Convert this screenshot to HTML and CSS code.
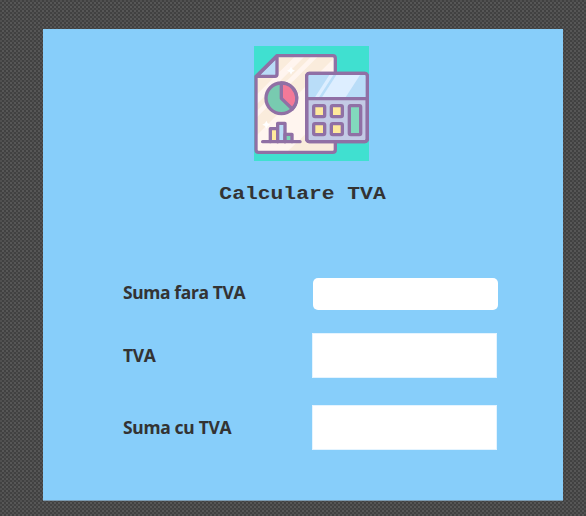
FILE: index.html
```html
<!DOCTYPE html>
<html lang="ro">
<head>
<meta charset="utf-8">
<title>Calculare TVA</title>
<link rel="stylesheet" href="styles.css">
</head>
<body>
<main class="card">
  <svg class="logo" viewBox="12 12 345 345" aria-hidden="true">
    <defs>
      <clipPath id="paper"><path d="M81 41H256V331H18V103Z"/></clipPath>
    </defs>
    <path fill="#40e0d0" d="M12 12H357V357H12Z"/>
    <path fill="#fff5ef" d="M81 41H256V331H18V103Z"/>
    <g clip-path="url(#paper)" fill="#faecdc">
      <path d="M18 41H137L18 160Z"/>
      <path d="M166 41H186L18 209V189Z"/>
      <path d="M206 41H256V44L18 282V229Z"/>
      <path d="M256 190V331H110Z"/>
    </g>
    <g class="line">
      <path fill="#b9dcf7" d="M81 42V97Q81 103 75 103H20Z"/>
      <path fill="none" d="M81 41H248Q256 41 256 49V323Q256 331 248 331H26Q18 331 18 323V103Z"/>
      <circle fill="#78cbb0" cx="94" cy="169" r="46"/>
      <path fill="#f37998" d="M94 123A46 46 0 0 1 127 201L94 169Z"/>
      <path fill="#ffe99c" d="M61 299V260H83V299"/>
      <path fill="#b9dcf7" d="M83 299V244H105V299"/>
      <path fill="#78d6b4" d="M105 299V277H126V299"/>
      <path fill="none" d="M38 299H150"/>
      <rect fill="#c3cae5" x="170" y="94" width="182" height="205" rx="8"/>
    </g>
    <path fill="#b9ddf8" d="M174 99H348V166H174Z"/>
    <g fill="#ddeeff">
      <path d="M238 99H250L207 166H195Z"/>
      <path d="M259 99H330L287 166H216Z"/>
    </g>
    <g class="line">
      <path fill="none" d="M170 170H352"/>
      <rect fill="none" x="170" y="94" width="182" height="205" rx="8"/>
    </g>
    <g class="keys">
      <rect x="191" y="191" width="33" height="33" rx="4"/>
      <rect x="244" y="191" width="33" height="33" rx="4"/>
      <rect x="191" y="245" width="33" height="33" rx="4"/>
      <rect x="244" y="245" width="33" height="33" rx="4"/>
      <rect class="enter" x="298" y="191" width="34" height="87" rx="4"/>
    </g>
    <g fill="#fff">
      <path d="M123 74L127 82L135 86L127 90L123 98L119 90L111 86L119 82Z"/>
      <path d="M49 236L53 244L61 248L53 252L49 260L45 252L37 248L45 244Z"/>
    </g>
  </svg>
  <h1 class="title">Calculare TVA</h1>
  <form class="fields">
    <div class="row">
      <label class="label label-net" for="net">Suma fara TVA</label>
      <input class="input" id="net" type="text">
    </div>
    <div class="row row-vat">
      <span class="label">TVA</span>
      <output class="result"></output>
    </div>
    <div class="row row-total">
      <span class="label">Suma cu TVA</span>
      <output class="result"></output>
    </div>
  </form>
</main>
</body>
</html>
```
FILE: styles.css
```css
* { box-sizing: border-box; }
body {
  margin: 0;
  height: 516px;
  overflow: hidden;
  padding: 29px 23px 0 43px;
  color: #333;
  background-color: #484848;
  background-image:
    conic-gradient(#414141 25%, #575757 0 50%, #414141 0 75%, #505050 0);
  background-size: 4px 4px;
}
.card {
  display: flex;
  flex-direction: column;
  align-items: center;
  height: 472px;
  padding-top: 17px;
  border-bottom: 1px solid #7b9bb2;
  background: #87cefa;
}
.logo {
  display: block;
  width: 115px;
  height: 115px;
  margin-left: 17px;
  flex: none;
}
.line {
  stroke: #9070a5;
  stroke-width: 10;
  stroke-linejoin: round;
  stroke-linecap: round;
}
.keys {
  fill: #ffe99c;
  stroke: #9070a5;
  stroke-width: 10;
}
.keys .enter { fill: #82d9bd; }
.title {
  margin: 21px 0 0;
  font: bold 18.6px/25px "Courier New", "Liberation Mono", monospace;
  transform: scaleX(1.147);
}
.fields {
  width: 374px;
  margin: 71px 0 0 14px;
}
.row {
  display: flex;
  align-items: center;
}
.row-vat { margin-top: 23px; }
.row-total { margin-top: 27px; }
.label {
  flex: none;
  width: 189px;
  padding-bottom: 1px;
  font: bold 17.5px/24px "Noto Sans", sans-serif;
  font-kerning: none;
  letter-spacing: -0.3px;
  white-space: nowrap;
}
.label-net {
  padding-bottom: 5px;
  letter-spacing: -0.35px;
}
.input {
  flex: none;
  width: 185px;
  height: 32px;
  margin-left: 1px;
  padding: 0 8px;
  border: 0;
  border-radius: 5px;
  background: #fff;
}
.result {
  width: 185px;
  height: 45px;
  border: 1px solid #e4f4ff;
  background: #fff;
}
```
